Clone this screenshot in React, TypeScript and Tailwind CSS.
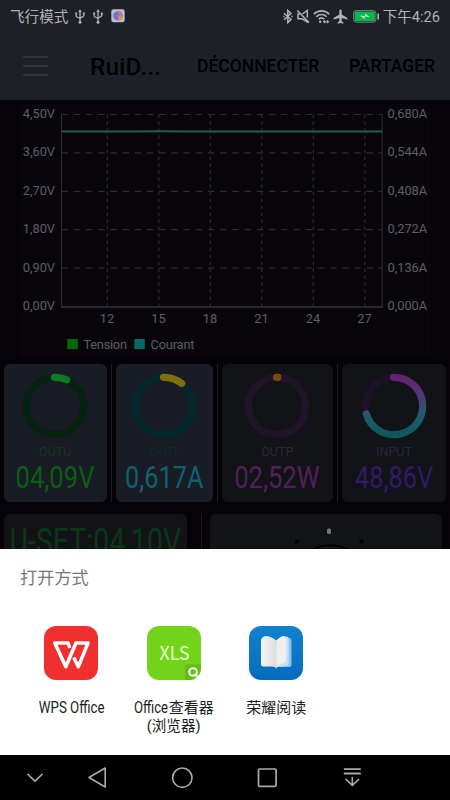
import React from "react";

const V_LABELS = ["4,50V", "3,60V", "2,70V", "1,80V", "0,90V", "0,00V"];
const A_LABELS = ["0,680A", "0,544A", "0,408A", "0,272A", "0,136A", "0,000A"];
const TICKS = [
  { label: "12", x: 107.3 },
  { label: "15", x: 158.8 },
  { label: "18", x: 210.3 },
  { label: "21", x: 261.8 },
  { label: "24", x: 313.3 },
  { label: "27", x: 364.8 },
];

const StatusBar = () => (
  <div className="flex h-8 items-center justify-between pl-2.5 pr-2.5 text-[#b0b2b5]">
    <div className="flex items-center">
      <span className="w-[60px] whitespace-nowrap pt-px text-[14.6px] leading-8">飞行模式</span>
      <UsbIcon />
      <UsbIcon />
      <svg width="14" height="14" viewBox="0 0 14 14" className="ml-1">
        <rect x="0.3" y="0.3" width="13.4" height="13" rx="2.2" fill="#b9bbc6" />
        <circle cx="7" cy="6.8" r="4.6" fill="#8367c4" />
        <path d="M7 6.8V2.2a4.6 4.6 0 0 1 4.5 4.6z" fill="#c2709b" />
        <path d="M7 6.8h4.5A4.6 4.6 0 0 1 7 11.4z" fill="#d08a72" />
        <path d="M7 6.8 3.4 9.7A4.6 4.6 0 0 1 3.5 3.8z" fill="#5b82cf" />
      </svg>
    </div>
    <div className="flex items-center">
      <svg width="10" height="15" viewBox="0 0 10 15" fill="none" stroke="currentColor" strokeWidth="1.5">
        <path d="M1 4.2 8 10.5 4.800 13.5V1.5L8 4.5 1 10.8" />
        <path d="M.3 7.5h1.300M8.3 7.5h1.300" strokeWidth="1.6" />
      </svg>
      <svg width="15" height="15" viewBox="0 0 15 15" fill="none" stroke="currentColor" strokeWidth="1.5" className="ml-[3px]">
        <path d="M6.3 5 11.3 1.5V8.5M11.3 11.5V13L6 9.8H2V5h2" />
        <path d="M1.3 1.5 13 13.5" />
      </svg>
      <svg width="17" height="15" viewBox="0 0 17 15" fill="none" stroke="currentColor" strokeWidth="1.6" className="ml-0.5">
        <path d="M.8 5.2C5 .8 12 .8 16.2 5.2M3.3 7.7c3-3 7.4-3 10.4 0M5.7 10.2c1.700-1.600 3.900-1.600 5.600 0" />
        <circle cx="7.2" cy="12.8" r="1.2" fill="currentColor" stroke="none" />
        <path d="M10.5 12.7h5M12 11.3l-1.500 1.400 1.500 1.300M14 11.3l1.500 1.400-1.500 1.300" strokeWidth="1.1" />
      </svg>
      <svg width="15" height="15" viewBox="0 0 15 15" fill="currentColor" className="ml-[3px]">
        <path d="M6.3 1.8C6.3.2 8.7.2 8.7 1.8V5.5L14.4 9v1.6L8.7 9v3.3l1.7 1.2v1.2l-2.9-.7-2.9.7v-1.2l1.700-1.200V9L.6 10.600V9l5.700-3.500z" />
      </svg>
      <svg width="27" height="13" viewBox="0 0 27 13" className="ml-[5px]">
        <rect x=".6" y=".6" width="22.3" height="11.6" rx="2.5" fill="#1d2127" stroke="#74837d" />
        <rect x="1.6" y="1.6" width="20.3" height="9.6" rx="1.2" fill="#08b84c" />
        <path d="M6.5 5.5 12 6.100V3.500l5 3.700-5.300-.6v2.500z" fill="#c2e2cd" />
        <path d="M25.200 3.500v6" stroke="#a9abae" strokeWidth="1.6" />
      </svg>
      <span className="ml-[3px] whitespace-nowrap pt-px text-[14.6px] leading-8">下午4:26</span>
    </div>
  </div>
);

const UsbIcon = () => (
  <svg width="10" height="15" viewBox="0 0 10 15" fill="none" stroke="currentColor" strokeWidth="1.3" className="ml-[4.5px] mr-[4.2px]">
    <path d="M5 2v11M1.2 4.5v2.500c0 1.600 3.800 1.400 3.800 3M8.800 4.500v2c0 2-3.800 1.400-3.800 3.500" />
    <path d="M5 0 3.300 3h3.400z" fill="currentColor" stroke="none" />
    <circle cx="5" cy="13.3" r="1.5" fill="currentColor" stroke="none" />
    <path d="M.2 4.300h2M7.800 4.300h2" strokeWidth="1.8" />
  </svg>
);

const AppBar = () => (
  <div className="flex h-[68px] items-center text-black">
    <div className="ml-[23px] flex w-[25px] flex-col gap-[7px]">
      <span className="h-0.5 bg-[#323536]" />
      <span className="h-0.5 bg-[#323536]" />
      <span className="h-0.5 bg-[#323536]" />
    </div>
    <span className="ml-[42px] w-[72px] whitespace-nowrap pt-0.5 text-[24.5px] font-medium tracking-[0.1px]">RuiD...</span>
    <span className="ml-[35px] w-[122px] whitespace-nowrap text-[17.5px] font-medium">DÉCONNECTER</span>
    <span className="ml-[30px] whitespace-nowrap text-[17.5px] font-medium">PARTAGER</span>
  </div>
);

const Chart = () => (
  <svg width="450" height="260" viewBox="0 0 450 260" className="block shrink-0" fontSize="12.8" fill="#5f5e62">
    <rect x="20" y="4" width="411" height="252" fill="#08060b" />
    {V_LABELS.map((label, i) => {
      const y = 14.5 + i * 38.4;
      return (
        <g key={label}>
          {i < 5 && <path d={`M61.500 ${y}H382`} stroke="#2c2b2f" strokeWidth="1.2" strokeDasharray="6.5 5.7" />}
          <text x="55" y={y + 3.5} textAnchor="end">{label}</text>
          <text x="387.5" y={y + 3.5}>{A_LABELS[i]}</text>
        </g>
      );
    })}
    {TICKS.map((t) => (
      <g key={t.label}>
        <path d={`M${t.x} 14.500V206`} stroke="#2c2b2f" strokeWidth="1.2" strokeDasharray="3.5 3.5" />
        <text x={t.x - 0.3} y="223" textAnchor="middle">{t.label}</text>
      </g>
    ))}
    <path d="M61.500 14V207M382.200 14V207" stroke="#2e2d31" />
    <path d="M61 207H382.700" stroke="#343337" strokeWidth="1.5" />
    <path d="M61.500 31.500H130L160 31.200 190 31.500H382" fill="none" stroke="#1a604e" strokeWidth="2" />
    <rect x="67.3" y="239" width="10.5" height="10.2" fill="#06680a" />
    <text x="83.5" y="248.8" textLength="43.5">Tension</text>
    <rect x="134.3" y="239" width="10.5" height="10.2" fill="#0d6667" />
    <text x="150.5" y="248.8" textLength="44">Courant</text>
  </svg>
);

type GaugeProps = {
  name: string;
  value: string;
  sweep: number;
  track: string;
  stroke: string;
  className: string;
  nameClass: string;
  valueClass: string;
};

const Gauge = ({ name, value, sweep, track, stroke, className, nameClass, valueClass }: GaugeProps) => {
  const rad = (sweep * Math.PI) / 180;
  const x = 34 + 28.7 * Math.sin(rad);
  const y = 34 - 28.7 * Math.cos(rad);
  return (
    <div className={`flex h-[138px] shrink-0 flex-col items-center rounded-md pt-2 ${className}`}>
      <svg width="68" height="68" viewBox="0 0 68 68" fill="none" strokeWidth="7.2" className="shrink-0">
        <defs>
          <linearGradient id="inputArc" gradientUnits="userSpaceOnUse" x1="0" y1="4" x2="0" y2="62">
            <stop offset="0" stopColor="#652071" />
            <stop offset="0.3" stopColor="#51357a" />
            <stop offset="0.55" stopColor="#344f76" />
            <stop offset="0.8" stopColor="#145f67" />
            <stop offset="1" stopColor="#10575a" />
          </linearGradient>
        </defs>
        <circle cx="34" cy="34" r="28.7" stroke={track} />
        <path
          d={`M33.500 5.300A28.700 28.700 0 ${sweep > 180 ? 1 : 0} 1 ${x} ${y}`}
          stroke={stroke}
          strokeLinecap="round"
        />
      </svg>
      <span className={`mt-[5px] text-[12.5px] leading-[14px] ${nameClass}`}>{name}</span>
      <span className={`mt-0.5 whitespace-nowrap text-[30.5px] leading-[34px] ${valueClass}`}>{value}</span>
    </div>
  );
};

const Divider = ({ className }: { className: string }) => (
  <div className={`w-px shrink-0 bg-[#1c1a22] ${className}`} />
);

const Gauges = () => (
  <div className="mt-1 flex h-[138px] shrink-0 pl-1">
    <Gauge name="OUTU" value="04,09V" sweep={24} track="#052310" stroke="#0b7c21" className="w-[102.5px] bg-[#191b25]" nameClass="text-[#133720]" valueClass="scale-x-[0.84] text-[#075f12]" />
    <Divider className="mx-1" />
    <Gauge name="OUTI" value="0,617A" sweep={38} track="#04292c" stroke="#80700c" className="w-[97px] bg-[#191b25]" nameClass="text-[#0a2d31]" valueClass="scale-x-[0.83] text-[#0c6370]" />
    <Divider className="mx-1" />
    <Gauge name="OUTP" value="02,52W" sweep={2} track="#211329" stroke="#7a4a0b" className="w-[111.5px] bg-[#111317]" nameClass="text-[#2e2639]" valueClass="scale-x-[0.84] text-[#512059]" />
    <Divider className="mx-1" />
    <Gauge name="INPUT" value="48,86V" sweep={254} track="#1d1028" stroke="url(#inputArc)" className="w-[104px] bg-[#111317]" nameClass="text-[#2b2442]" valueClass="scale-x-[0.83] text-[#32196b]" />
  </div>
);

const Settings = () => (
  <div className="mt-3 flex h-[35px] shrink-0 overflow-hidden pl-1">
    <div className="flex h-24 w-[183px] justify-center rounded-md bg-[#111317] pt-[5px]">
      <span className="scale-x-[0.77] whitespace-nowrap text-[37px] leading-[46px] text-[#0a3816]">U-SET:04,10V</span>
    </div>
    <Divider className="ml-3.5 mr-2 h-24" />
    <div className="flex h-24 w-[232px] justify-center rounded-md bg-[#111317]">
      <svg width="120" height="35" viewBox="0 0 120 35" fill="none">
        <rect x="61" y="14.5" width="4" height="5.5" rx="1.5" fill="#707276" />
        <circle cx="31" cy="27.500" r="2.2" fill="#020203" />
        <circle cx="95.5" cy="27.500" r="2.2" fill="#020203" />
        <path d="M46 35.500q18-8.500 37 0" stroke="#020203" strokeWidth="1.6" />
      </svg>
    </div>
  </div>
);

const WpsIcon = () => (
  <svg width="54" height="54" viewBox="0 0 54 54">
    <rect width="54" height="54" rx="12" fill="#f0302f" />
    <g fill="none" stroke="#fff" strokeWidth="3.5" strokeLinejoin="round">
      <path d="M25.800 22 24 17H10.800L21.800 40.800 32 17H44L34.300 40.800 29.800 31.500" />
    </g>
  </svg>
);

const XlsIcon = () => (
  <svg width="54" height="54" viewBox="0 0 54 54">
    <clipPath id="xlsClip">
      <rect width="54" height="54" rx="12" />
    </clipPath>
    <g clipPath="url(#xlsClip)">
      <rect width="54" height="54" fill="#74d31b" />
      <path d="M38 54V41.500q0-3 3-3H54V54z" fill="#67b91e" />
    </g>
    <text x="12.5" y="33.8" fontFamily="'Noto Sans CJK SC'" fontSize="19" fill="#e8ffd2" textLength="30" lengthAdjust="spacingAndGlyphs">XLS</text>
    <circle cx="46" cy="46" r="3.8" fill="none" stroke="#eefbdc" strokeWidth="2.1" />
    <path d="m46.500 48.500 4.500 1.500" stroke="#eefbdc" strokeWidth="2" />
  </svg>
);

const BookIcon = () => (
  <svg width="54" height="54" viewBox="0 0 54 54">
    <defs>
      <linearGradient id="bookBg" x1="0" y1="0" x2="0" y2="1">
        <stop offset="0" stopColor="#1282cd" />
        <stop offset="1" stopColor="#056bbd" />
      </linearGradient>
      <linearGradient id="page" x1="0" y1="0" x2="1" y2="0">
        <stop offset="0" stopColor="#f5f4f2" />
        <stop offset="1" stopColor="#dbdcdc" />
      </linearGradient>
    </defs>
    <rect width="54" height="54" rx="12" fill="url(#bookBg)" />
    <path d="M27 41V15q7-5 13-3.200Q42.500 12 42.500 14.500V39q0 2-2 2z" fill="#8cc3ec" />
    <path d="M27 41V15q6-5 11-4.500Q39.800 11 39.800 13V37q0 2.500-3 3z" fill="#c3e2f7" />
    <path d="M27.300 14.500Q31 10.500 34 10q3 0 3 3V34q0 2.500-3.500 3.500-4 1.500-6.200 5z" fill="#eeeeed" />
    <path d="M27.300 14.500Q22 10 16.500 10 12 11 12 14.500V38q0 2.500 2.500 2.500H23q3 0 4.300 2z" fill="url(#page)" />
  </svg>
);

const AppItem = ({ icon, children }: { icon: React.ReactNode; children: React.ReactNode }) => (
  <div className="flex w-[102.5px] flex-col items-center">
    {icon}
    <div className="mt-[19px] flex flex-col items-center whitespace-nowrap text-[15px] leading-[18px] text-[#1c1c1c]">{children}</div>
  </div>
);

const OpenWithSheet = () => (
  <div className="h-[206px] shrink-0 bg-white">
    <h2 className="pl-5 pt-[17px] text-[17.2px] leading-[24px] text-[#777]">打开方式</h2>
    <div className="flex pl-[20px] pt-9">
      <AppItem icon={<WpsIcon />}>
        <span className="scale-x-[0.85] text-[15.6px]">WPS Office</span>
      </AppItem>
      <AppItem icon={<XlsIcon />}>
        <span className="flex">
          <span className="w-[35px] origin-left scale-x-[0.84] text-[15.6px]">Office</span>查看器
        </span>
        <span className="scale-x-[0.97]">(浏览器)</span>
      </AppItem>
      <AppItem icon={<BookIcon />}>
        <span>荣耀阅读</span>
      </AppItem>
    </div>
  </div>
);

const NavBar = () => (
  <div className="flex h-[45px] shrink-0 items-center bg-black pl-[23px] text-[#aaa]">
    <svg width="24" height="24" viewBox="0 0 24 24" fill="none" stroke="currentColor" strokeWidth="1.7">
      <path d="m4.500 8 7.500 7 7.500-7" />
    </svg>
    <svg width="24" height="24" viewBox="0 0 24 24" fill="none" stroke="currentColor" strokeWidth="1.6" strokeLinejoin="round" className="ml-[38px]">
      <path d="M20.200 2v19L4 11.500z" />
    </svg>
    <svg width="24" height="24" viewBox="0 0 24 24" fill="none" stroke="currentColor" strokeWidth="1.6" className="ml-[61px]">
      <circle cx="12.3" cy="11.7" r="9.7" />
    </svg>
    <svg width="24" height="24" viewBox="0 0 24 24" fill="none" stroke="currentColor" strokeWidth="1.7" className="ml-[61px]">
      <rect x="3.500" y="3" width="17.6" height="17.3" rx="1" />
    </svg>
    <svg width="24" height="24" viewBox="0 0 24 24" fill="none" stroke="currentColor" strokeWidth="1.8" className="ml-[61px]">
      <path d="M3.800 3.200h17M3.800 7.500h17" />
      <path d="M12.300 11v8.500M5.500 13l6.800 6.300 6.800-6.300" strokeWidth="1.6" />
    </svg>
  </div>
);

export default function App() {
  return (
    <div className="flex h-[800px] w-[450px] flex-col overflow-hidden bg-[#050208] font-[Roboto,'Noto_Sans_CJK_SC',sans-serif]">
      <header className="h-[100px] shrink-0 bg-[#1d2127]">
        <StatusBar />
        <AppBar />
      </header>
      <Chart />
      <Gauges />
      <Settings />
      <OpenWithSheet />
      <NavBar />
    </div>
  );
}
